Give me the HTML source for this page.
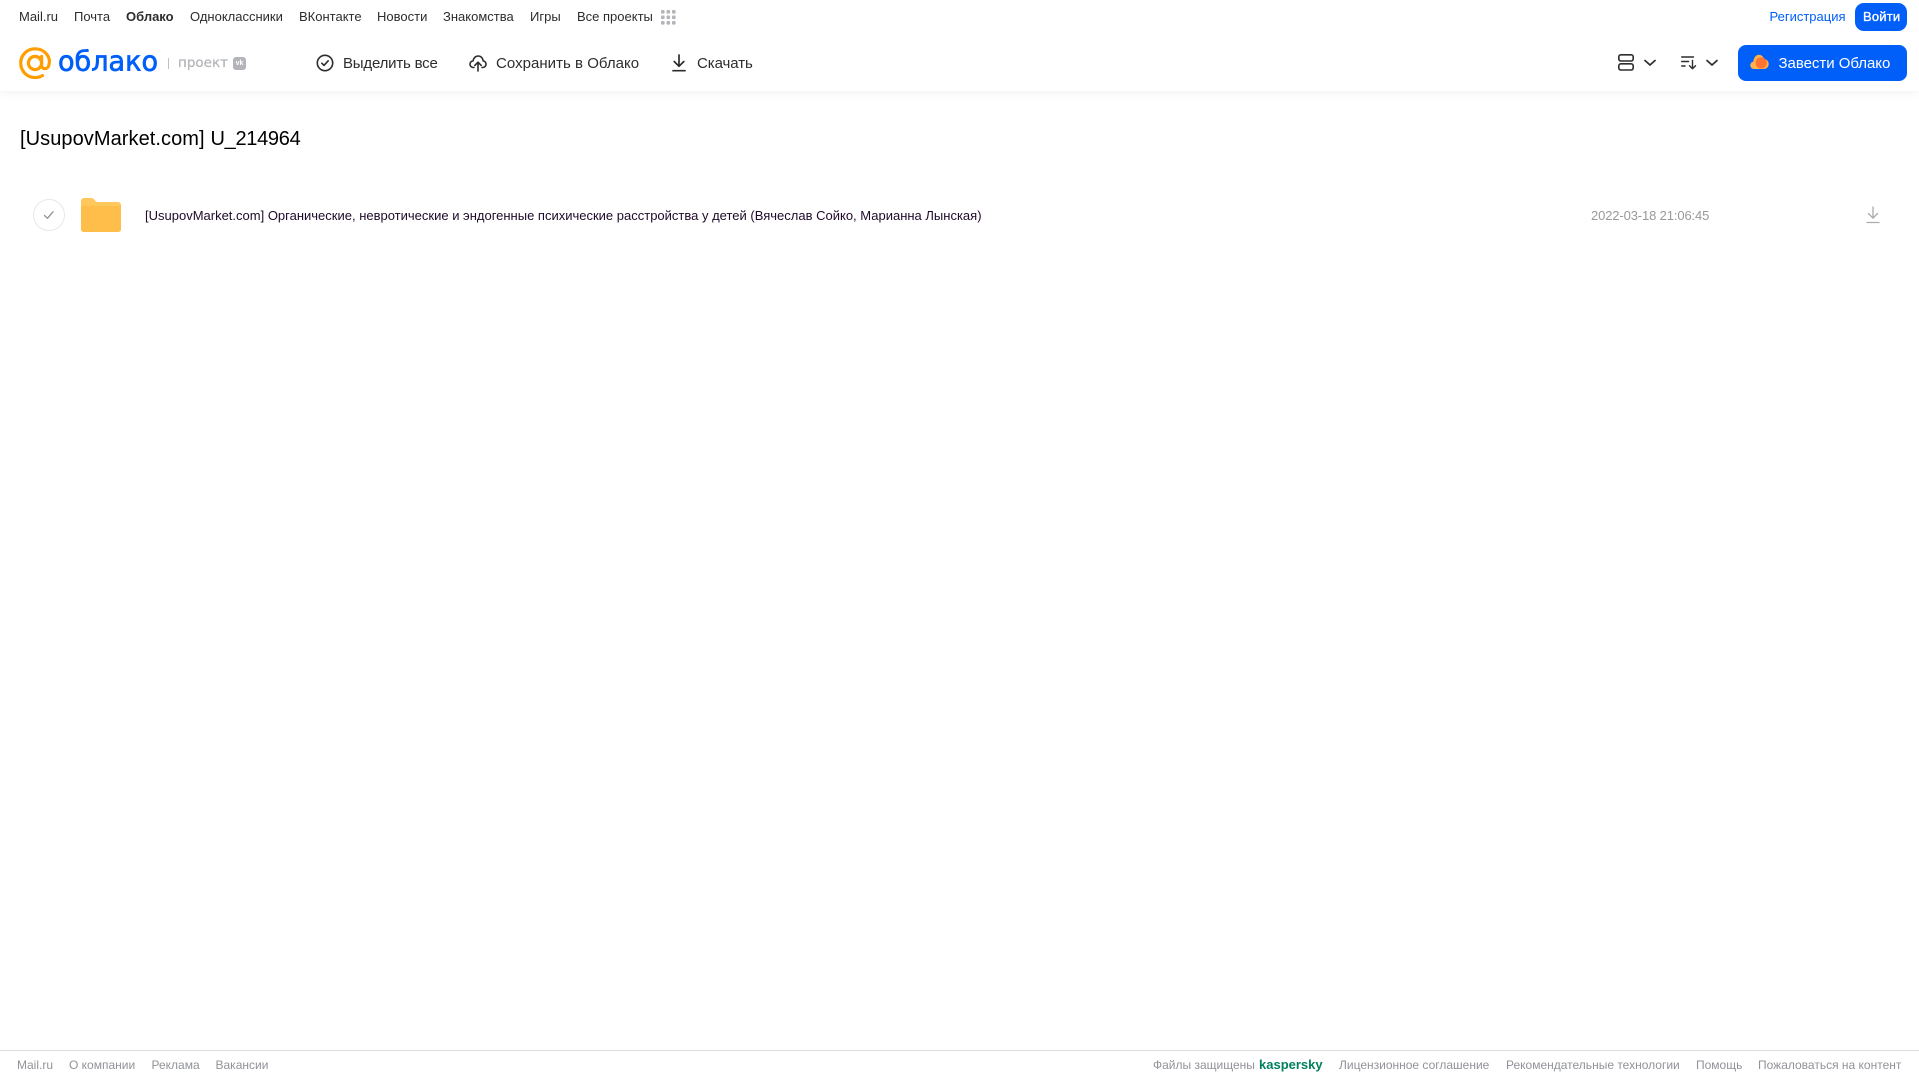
<!DOCTYPE html>
<html lang="ru">
<head>
<meta charset="utf-8">
<title>Облако</title>
<style>
html,body{margin:0;padding:0;background:#fff;}
body{position:relative;width:1919px;height:1079px;overflow:hidden;font-family:"Liberation Sans","Noto Sans CJK SC",sans-serif;color:#2c2d2e;}
.t{position:absolute;white-space:nowrap;line-height:20px;}
.n{top:7px;font-size:13px;color:#2c2d2e;}
.a{top:54px;font-size:15px;color:#2c2d2e;line-height:20px;}
.f{top:1055px;font-size:12px;color:#919399;}
svg{position:absolute;display:block;overflow:visible;}
#hd{position:absolute;left:0;top:0;width:1919px;height:91px;background:#fff;box-shadow:0 0 10px rgba(0,0,0,.07);}
</style>
</head>
<body>
<div id="hd"></div>

<span class="t n" style="left:19px">Mail.ru</span>
<span class="t n" style="left:74px">Почта</span>
<span class="t n" style="left:126px;font-weight:bold">Облако</span>
<span class="t n" style="left:190px">Одноклассники</span>
<span class="t n" style="left:299px">ВКонтакте</span>
<span class="t n" style="left:377px">Новости</span>
<span class="t n" style="left:443px">Знакомства</span>
<span class="t n" style="left:530px">Игры</span>
<span class="t n" style="left:577px">Все проекты</span>
<svg style="left:661px;top:10px" width="15" height="15" fill="#b3b5b9">
<rect x="0" y="0" width="3.6" height="3.6" rx="1"/><rect x="5.5" y="0" width="3.6" height="3.6" rx="1"/><rect x="11" y="0" width="3.6" height="3.6" rx="1"/>
<rect x="0" y="5.5" width="3.6" height="3.6" rx="1"/><rect x="5.5" y="5.5" width="3.6" height="3.6" rx="1"/><rect x="11" y="5.5" width="3.6" height="3.6" rx="1"/>
<rect x="0" y="11" width="3.6" height="3.6" rx="1"/><rect x="5.5" y="11" width="3.6" height="3.6" rx="1"/><rect x="11" y="11" width="3.6" height="3.6" rx="1"/>
</svg>

<span class="t n" style="left:1769.5px;color:#005ff9">Регистрация</span>
<div style="position:absolute;left:1855px;top:3px;width:52px;height:28px;border-radius:9px;background:#005ff9"></div>
<span class="t n" style="left:1863px;color:#fff;-webkit-text-stroke:.35px #fff;letter-spacing:.2px">Войти</span>

<!-- Logo -->
<svg style="left:19px;top:47px" width="33" height="33" viewBox="0 0 33 33" fill="none" stroke="#ff9e00">
<circle cx="16" cy="16" r="6.6" stroke-width="3.2"/>
<path d="M22.6 9.5V18C22.6 22.6 28.3 23 29.8 18.5C32.3 10.5 26.3 1.8 16 1.8C8 1.8 1.7 8.2 1.7 16C1.7 24.2 8.2 30.5 16 30.5C18.8 30.5 21.2 29.9 23.4 28.6" stroke-width="3.2" stroke-linecap="round"/>
</svg>
<svg style="left:56px;top:40px" width="110" height="40">
<text x="2" y="30.5" font-family="'DejaVu Sans',sans-serif" font-size="28" fill="#005ff9" stroke="#005ff9" stroke-width=".7" textLength="100" lengthAdjust="spacingAndGlyphs">облако</text>
</svg>
<div style="position:absolute;left:168px;top:58px;width:1px;height:11px;background:#bfc1c5"></div>
<svg style="left:178px;top:50px" width="52" height="20">
<text x="0" y="17" font-family="'DejaVu Sans',sans-serif" font-size="13.5" fill="#b3b5b9" stroke="#b3b5b9" stroke-width=".25" textLength="50" lengthAdjust="spacingAndGlyphs">проект</text>
</svg>
<div style="position:absolute;left:233px;top:57px;width:13px;height:13px;border-radius:3px;background:#b3b5b9;color:#fff;font-size:7px;font-weight:bold;line-height:13px;text-align:center">vk</div>

<!-- Actions -->
<svg style="left:316px;top:54px" width="18" height="18" viewBox="0 0 18 18" fill="none" stroke="#2c2d2e" stroke-width="1.6">
<circle cx="9" cy="9" r="7.7"/><path d="M5.8 9.2L8 11.4L12.2 6.8" stroke-linecap="round" stroke-linejoin="round"/>
</svg>
<span class="t a" style="left:343px;letter-spacing:-.2px">Выделить все</span>

<svg style="left:469px;top:54px" width="18" height="18" viewBox="0 0 18 18" fill="none" stroke="#2c2d2e" stroke-width="1.6" stroke-linecap="round" stroke-linejoin="round">
<path d="M5 13.5H4.5C2.5 13.5 1 12 1 10.2C1 8.4 2.3 7 4 6.9C4.5 4 6.6 2 9.2 2C11.8 2 13.8 4 14.2 6.9C15.9 7.1 17 8.5 17 10.2C17 12 15.5 13.5 13.5 13.5H13"/>
<path d="M9 17V8.5M5.8 11.4L9 8.2L12.2 11.4"/>
</svg>
<span class="t a" style="left:496px;letter-spacing:.03px">Сохранить в Облако</span>

<svg style="left:671px;top:54px" width="16" height="18" viewBox="0 0 16 18" fill="none" stroke="#2c2d2e" stroke-width="1.7" stroke-linecap="round" stroke-linejoin="round">
<path d="M8 1V12M3.2 7.5L8 12.3L12.8 7.5"/><path d="M2 16.7H14"/>
</svg>
<span class="t a" style="left:697px;letter-spacing:-.07px">Скачать</span>

<!-- Right toolbar -->
<svg style="left:1618px;top:54px" width="16" height="17" viewBox="0 0 16 17" fill="none" stroke="#2c2d2e" stroke-width="1.6">
<rect x=".8" y=".8" width="14.4" height="6.2" rx="2"/><rect x=".8" y="9.8" width="14.4" height="6.2" rx="2"/>
</svg>
<svg style="left:1644px;top:59px" width="12" height="8" viewBox="0 0 12 8" fill="none" stroke="#2c2d2e" stroke-width="1.7" stroke-linecap="round" stroke-linejoin="round"><path d="M1 1.5L6 6L11 1.5"/></svg>
<svg style="left:1681px;top:56px" width="16" height="14" viewBox="0 0 16 14" fill="none" stroke="#2c2d2e" stroke-width="1.4" stroke-linecap="round" stroke-linejoin="round">
<path d="M.7 1H12.5M.7 5.5H7.5M.7 10H4"/><path d="M11.5 4.5V12.5M8.5 9.7L11.5 12.7L14.5 9.7"/>
</svg>
<svg style="left:1706px;top:59px" width="12" height="8" viewBox="0 0 12 8" fill="none" stroke="#2c2d2e" stroke-width="1.7" stroke-linecap="round" stroke-linejoin="round"><path d="M1 1.5L6 6L11 1.5"/></svg>

<div style="position:absolute;left:1738px;top:45px;width:169px;height:36px;border-radius:8px;background:#005ff9"></div>
<svg style="left:1750px;top:54px" width="19" height="16" viewBox="0 0 19 16">
<path d="M4 15C1.8 15 .3 13.4 .3 11.3C.3 9.4 1.6 8 3.3 7.6C3.7 3.5 6 .8 9 .8C11.6 .8 13.3 2.6 14 5C16.8 5.2 18.7 7.4 18.7 10C18.7 12.8 16.6 15 13.8 15Z" fill="#ffb14a"/>
<circle cx="11.2" cy="9" r="5.6" fill="#ff6a2b" fill-opacity=".85"/>
</svg>
<span class="t a" style="left:1778.5px;color:#fff;letter-spacing:-.03px">Завести Облако</span>

<!-- Title -->
<span class="t" style="left:20px;top:127px;font-size:20px;line-height:24px;color:#000;letter-spacing:.07px">[UsupovMarket.com]</span>
<span class="t" style="left:210.5px;top:127px;font-size:20px;line-height:24px;color:#000;letter-spacing:-.3px">U_214964</span>

<!-- Row -->
<div style="position:absolute;left:33px;top:199px;width:30px;height:30px;border:1px solid #e7e8ea;border-radius:50%"></div>
<svg style="left:43px;top:210px" width="12" height="10" viewBox="0 0 12 10" fill="none" stroke="#8f9196" stroke-width="1.3" stroke-linecap="round" stroke-linejoin="round"><path d="M1.5 5.5L4.5 8.3L10 1.8"/></svg>
<svg style="left:81px;top:198px" width="40" height="34" viewBox="0 0 40 34">
<path d="M0 3C0 1.3 1.3 0 3 0H10C12 0 13 1 14 2.5C14.6 3.5 15.5 4 17 4H37C38.7 4 40 5.3 40 7V31C40 32.7 38.7 34 37 34H3C1.3 34 0 32.7 0 31Z" fill="#ffc75c"/>
<path d="M0 8H40V31C40 32.7 38.7 34 37 34H3C1.3 34 0 32.7 0 31Z" fill="#ffbe4a"/>
</svg>
<span class="t" style="left:145px;top:206px;font-size:13px;color:#1f0a2a">[UsupovMarket.com] Органические, невротические и эндогенные психические расстройства у детей (Вячеслав Сойко, Марианна Лынская)</span>
<span class="t" style="left:1591px;top:206px;font-size:13px;color:#999;letter-spacing:-.13px">2022-03-18 21:06:45</span>
<svg style="left:1866px;top:206px" width="14" height="18" viewBox="0 0 14 18" fill="none" stroke="#a9abaf" stroke-width="1.3" stroke-linecap="round" stroke-linejoin="round">
<path d="M7 1V12M2.5 7.5L7 12.2L11.5 7.5"/><path d="M1 16.5H13"/>
</svg>

<!-- Footer -->
<div style="position:absolute;left:0;top:1050px;width:1919px;height:1px;background:#dcdcdc"></div>
<span class="t f" style="left:17px">Mail.ru</span>
<span class="t f" style="left:69px">О компании</span>
<span class="t f" style="left:151.5px">Реклама</span>
<span class="t f" style="left:215.5px">Вакансии</span>
<span class="t f" style="left:1153px">Файлы защищены</span>
<span class="t f" style="left:1259px;color:#00805f;font-weight:bold;font-size:13px">kaspersky</span>
<span class="t f" style="left:1339px">Лицензионное соглашение</span>
<span class="t f" style="left:1506px">Рекомендательные технологии</span>
<span class="t f" style="left:1696px">Помощь</span>
<span class="t f" style="left:1758px">Пожаловаться на контент</span>
</body>
</html>
